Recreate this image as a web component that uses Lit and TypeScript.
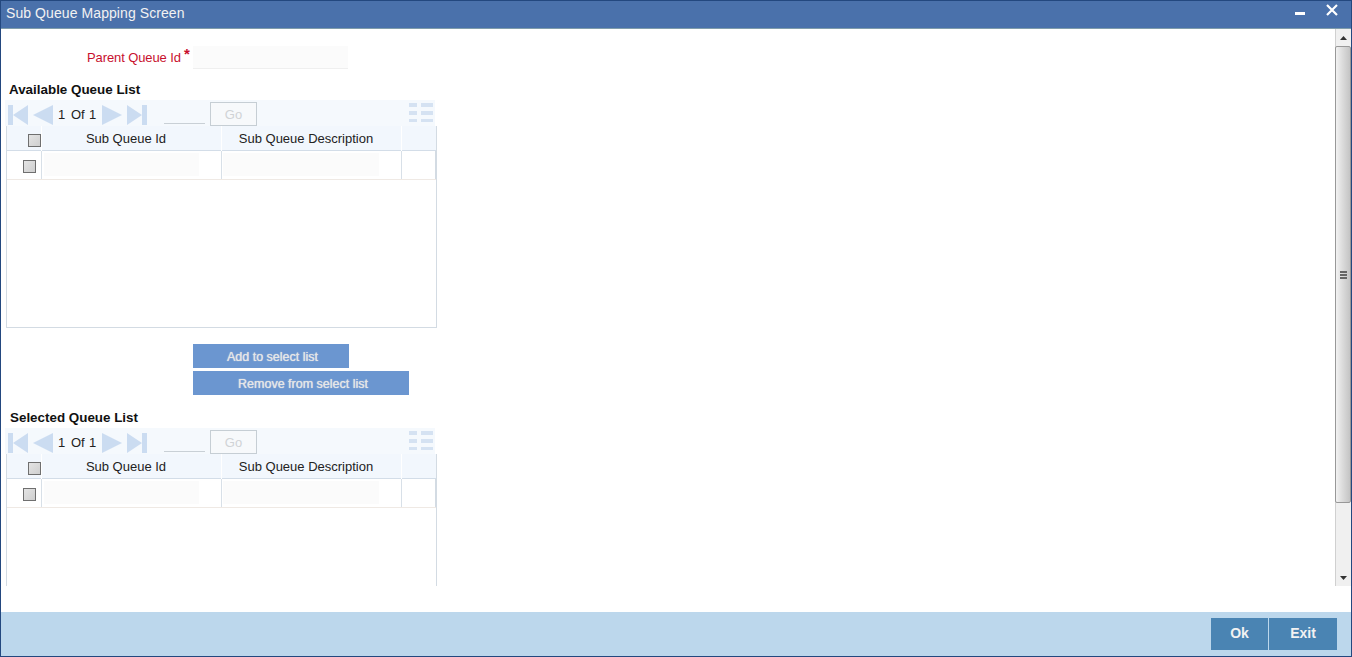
import {html, css, LitElement, TemplateResult} from 'lit';
import {customElement} from 'lit/decorators.js';

@customElement('queue-grid')
export class QueueGrid extends LitElement {
  static styles = css`
    :host {
      display: block;
    }
    * {
      box-sizing: border-box;
    }
    .pager {
      display: flex;
      align-items: flex-start;
      width: 430px;
      height: 26px;
      margin-left: 4px;
      background: #f5f9fd;
    }
    .pager > * {
      flex: none;
    }
    .nav {
      display: block;
      margin-top: 5px;
    }
    .nav.first {
      margin-left: 3px;
    }
    .nav.prev,
    .nav.next,
    .nav.last {
      margin-left: 5px;
    }
    .count {
      display: flex;
      width: 39px;
      margin-left: 5px;
      padding-top: 7px;
      font-size: 13px;
      line-height: 15px;
      color: #222;
    }
    .count span:nth-child(1) {
      width: 13px;
    }
    .count span:nth-child(2) {
      width: 18px;
    }
    .page-input {
      width: 41px;
      height: 24px;
      margin-left: 17px;
      border-bottom: 1px solid #c9d0d6;
    }
    .go {
      width: 47px;
      height: 24px;
      margin-left: 5px;
      margin-top: 2px;
      border: 1px solid #c6ced4;
      background: #f7f9fb;
      color: #d0d3d6;
      font-size: 13px;
      line-height: 23px;
      text-align: center;
    }
    .columns {
      display: block;
      margin-left: 152px;
      margin-top: 3px;
    }
    .table {
      width: 431px;
      height: 202px;
      margin-left: 5px;
      border-left: 1px solid #d3dbe3;
      border-right: 1px solid #d3dbe3;
      border-bottom: 1px solid #d3dbe3;
    }
    .tr {
      display: grid;
      grid-template-columns: 35px 180px 180px 34px;
    }
    .tr.head {
      height: 25px;
      background: #f2f7fd;
      border-bottom: 1px solid #d3dde8;
    }
    .tr.body {
      height: 29px;
      border-bottom: 1px solid #efe9e4;
    }
    .td {
      border-right: 1px solid #d8e0e8;
    }
    .td:last-child {
      border-right: 0;
    }
    .head .td {
      border-right-color: #fff;
      padding-right: 11px;
      text-align: center;
      font-size: 13px;
      line-height: 26px;
      color: #222;
    }
    .body .td:last-child {
      border-right: 1px solid #d3dbe3;
    }
    .check {
      width: 13px;
      height: 13px;
      border: 1px solid #6f6f6f;
      background: linear-gradient(135deg, #e4e4e4, #cfcfcf);
    }
    .head .check {
      margin: 8px 0 0 21px;
    }
    .body .check {
      margin: 9px 0 0 16px;
    }
    .cell-input {
      width: 155px;
      height: 23px;
      margin: 2px 0 0 2px;
      background: #fbfbfb;
    }
    .td.desc .cell-input {
      width: 156px;
      margin-left: 1px;
    }
  `;

  render(): TemplateResult {
    return html`
      <div class="pager">
        <svg class="nav first" width="20" height="20" viewBox="0 0 20 20"><path fill="#cbdcf1" d="M0 0h5v20H0zM5 10 20 0v20z"/></svg>
        <svg class="nav prev" width="20" height="20" viewBox="0 0 20 20"><path fill="#cbdcf1" d="M0 10 20 0v20z"/></svg>
        <div class="count"><span>1</span><span>Of</span><span>1</span></div>
        <svg class="nav next" width="20" height="20" viewBox="0 0 20 20"><path fill="#cbdcf1" d="M0 0l20 10L0 20z"/></svg>
        <svg class="nav last" width="20" height="20" viewBox="0 0 20 20"><path fill="#cbdcf1" d="M0 0l15 10L0 20zM15 0h5v20h-5z"/></svg>
        <div class="page-input"></div>
        <div class="go">Go</div>
        <svg class="columns" width="24" height="19" viewBox="0 0 24 19"><path fill="#d5e2f2" d="M0 0h8v4H0zM12 0h12v4H12zM0 8h8v4H0zM12 8h12v4H12zM0 16h8v3H0zM12 16h12v3H12z"/></svg>
      </div>
      <div class="table">
        <div class="tr head">
          <div class="td"><div class="check"></div></div>
          <div class="td">Sub Queue Id</div>
          <div class="td">Sub Queue Description</div>
          <div class="td"></div>
        </div>
        <div class="tr body">
          <div class="td"><div class="check"></div></div>
          <div class="td"><div class="cell-input"></div></div>
          <div class="td desc"><div class="cell-input"></div></div>
          <div class="td"></div>
        </div>
      </div>
    `;
  }
}

@customElement('app-root')
export class AppRoot extends LitElement {
  static styles = css`
    :host {
      display: block;
      width: 1352px;
      height: 657px;
      font-family: "Liberation Sans", Arial, sans-serif;
    }
    * {
      box-sizing: border-box;
    }
    .window {
      display: flex;
      flex-direction: column;
      width: 100%;
      height: 100%;
      border: 1px solid #23487f;
      background: #fff;
    }
    .titlebar {
      display: flex;
      align-items: center;
      justify-content: space-between;
      flex: none;
      height: 28px;
      padding: 0 13px 0 5px;
      background: #4a71ab;
      border-bottom: 1px solid #7f9cab;
      color: #f2f2f2;
      font-size: 14px;
    }
    .title {
      padding-bottom: 3px;
      letter-spacing: 0.08px;
    }
    .win-actions {
      display: flex;
      align-items: flex-start;
      gap: 21px;
      height: 100%;
    }
    .win-actions svg {
      display: block;
    }
    .main {
      display: flex;
      flex: none;
      height: 557px;
      overflow: hidden;
    }
    .content {
      flex: 1;
      height: 100%;
      overflow: hidden;
    }
    .parent {
      display: flex;
      align-items: flex-start;
      height: 23px;
      margin: 17px 0 0 86px;
      color: #c8102e;
    }
    .parent label {
      margin-top: 4px;
      font-size: 13px;
      line-height: 16px;
      letter-spacing: -0.1px;
    }
    .star {
      width: 6px;
      margin: 0 3px 0 3px;
      font-size: 15px;
      font-weight: bold;
      line-height: 16px;
    }
    .parent .field {
      width: 155px;
      height: 23px;
      background: #fbfbfb;
      border-bottom: 1px solid #efefef;
    }
    h2 {
      margin: 0;
      font-size: 13.4px;
      line-height: 16px;
      font-weight: bold;
      color: #111;
    }
    .heading-a {
      margin: 13px 0 2px 8px;
    }
    .heading-b {
      margin: 15px 0 2px 9px;
    }
    .actions {
      display: flex;
      flex-direction: column;
      align-items: flex-start;
      gap: 3px;
      margin: 16px 0 0 192px;
    }
    .btn {
      height: 24px;
      background: #6b96d0;
      color: #e6e6e6;
      font-size: 12.5px;
      line-height: 26px;
      text-align: center;
      text-shadow: 0 0 1px #eee;
    }
    .btn.add {
      width: 156px;
      padding-left: 3px;
    }
    .btn.remove {
      width: 216px;
      padding-left: 4px;
    }
    .scrollbar {
      display: flex;
      flex-direction: column;
      flex: none;
      width: 16px;
      height: 100%;
      background: #f0f0f0;
      border-left: 1px solid #d0d0d0;
    }
    .arrow {
      flex: none;
      display: flex;
      align-items: center;
      justify-content: center;
      height: 17px;
    }
    .thumb {
      flex: none;
      display: flex;
      align-items: center;
      justify-content: center;
      height: 457px;
      margin-left: -1px;
      border: 1px solid #989898;
      border-radius: 2px;
      background: linear-gradient(90deg, #f2f2f2, #dcdcdc 45%, #c4c4c4);
    }
    .track {
      flex: 1;
    }
    .spacer {
      flex: 1;
    }
    .footer {
      display: flex;
      justify-content: flex-end;
      align-items: flex-start;
      flex: none;
      height: 44px;
      padding: 6px 14px 0 0;
      background: #bcd7ec;
    }
    .foot-btn {
      height: 32px;
      background: #4a84b3;
      color: #f2f2f2;
      font-size: 14px;
      font-weight: bold;
      line-height: 31px;
      text-align: center;
    }
    .foot-btn.ok {
      width: 57px;
      margin-right: 1px;
    }
    .foot-btn.exit {
      width: 68px;
    }
  `;

  render(): TemplateResult {
    return html`
      <div class="window">
        <div class="titlebar">
          <div class="title">Sub Queue Mapping Screen</div>
          <div class="win-actions">
            <svg width="10" height="28" viewBox="0 0 10 28"><rect x="0" y="11" width="10" height="3" fill="#fff"/></svg>
            <svg width="12" height="28" viewBox="0 0 12 28"><path d="M1 4l10 10M11 4 1 14" stroke="#fff" stroke-width="2.2" fill="none"/></svg>
          </div>
        </div>
        <div class="main">
          <div class="content">
            <div class="parent">
              <label>Parent Queue Id</label>
              <span class="star">*</span>
              <div class="field"></div>
            </div>
            <h2 class="heading-a">Available Queue List</h2>
            <queue-grid></queue-grid>
            <div class="actions">
              <div class="btn add">Add to select list</div>
              <div class="btn remove">Remove from select list</div>
            </div>
            <h2 class="heading-b">Selected Queue List</h2>
            <queue-grid></queue-grid>
          </div>
          <div class="scrollbar">
            <div class="arrow"><svg width="7" height="4" viewBox="0 0 7 4"><path d="M3.5 0 7 4H0z" fill="#333"/></svg></div>
            <div class="thumb"><svg width="7" height="8" viewBox="0 0 7 8"><path fill="#666" d="M0 0h7v2H0zM0 3h7v2H0zM0 6h7v2H0z"/></svg></div>
            <div class="track"></div>
            <div class="arrow"><svg width="7" height="4" viewBox="0 0 7 4"><path d="M0 0h7L3.500 4z" fill="#333"/></svg></div>
          </div>
        </div>
        <div class="spacer"></div>
        <div class="footer">
          <div class="foot-btn ok">Ok</div>
          <div class="foot-btn exit">Exit</div>
        </div>
      </div>
    `;
  }
}
